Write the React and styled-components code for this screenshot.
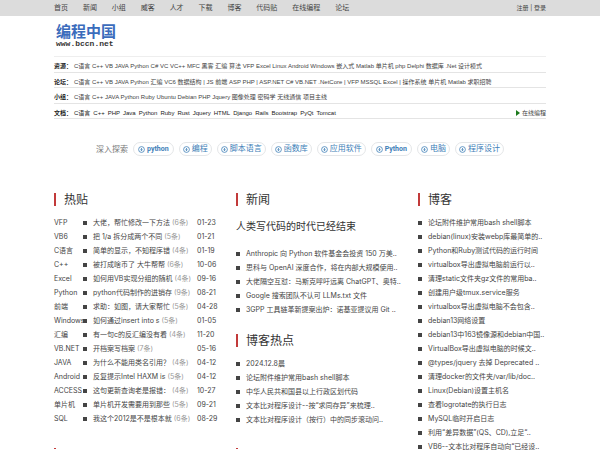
import React from "react";
import styled, { createGlobalStyle } from "styled-components";

const GlobalStyle = createGlobalStyle`
  * { box-sizing: border-box; }
  body {
    margin: 0;
    background: #fff;
    color: #444;
    font: 7px/14px Inter, "Noto Sans CJK SC", sans-serif;
  }
  a { color: inherit; text-decoration: none; }
  ul { list-style: none; margin: 0; padding: 0; }
`;

const TopBar = styled.header`
  display: flex;
  justify-content: space-between;
  align-items: center;
  height: 16px;
  padding: 0 9%;
  background: #dcdcdc;
  line-height: 16px;
`;
const Nav = styled.nav`
  display: flex;
  justify-content: space-between;
  width: 60%;
`;
const Account = styled.div`
  font-size: 6px;
  white-space: nowrap;
`;
const Page = styled.main`
  padding: 0 9%;
`;
const Logo = styled.a`
  display: block;
  width: max-content;
  margin: 7px 0 8px 2px;
`;
const LogoName = styled.strong`
  display: block;
  font: 700 15px/17px "Liberation Sans", "Noto Sans CJK SC", sans-serif;
  color: #3b6cbc;
`;
const LogoUrl = styled.span`
  display: block;
  font: 700 8px/8px "Liberation Mono", monospace;
  color: #333;
`;
const Directory = styled.section`
  display: flex;
  flex-direction: column;
  height: 63px;
  border-top: 1px solid #eee;
`;
const DirectoryRow = styled.div`
  display: flex;
  flex: 1;
  align-items: center;
  padding-top: 4px;
  border-bottom: 1px solid #e4e4e4;
  font-family: "Liberation Sans", "Noto Sans CJK SC", sans-serif;
  font-size: 6px;
  line-height: 10px;
  white-space: nowrap;
`;
const RowName = styled.strong`
  width: 20px;
  color: #222;
`;
const RowLinks = styled.div`
  display: ${(p) => (p.$wide ? "flex" : "block")};
  gap: 3px;
  color: ${(p) => (p.$wide ? "#222" : "#444")};
`;
const OnlineLink = styled.a`
  display: flex;
  align-items: center;
  gap: 2px;
  margin-left: auto;
`;
const Explore = styled.section`
  display: flex;
  justify-content: center;
  align-items: center;
  gap: 5px;
  margin: 23px 0 37px;
  white-space: nowrap;
`;
const ExploreTitle = styled.span`
  font-size: 8px;
  color: #777;
`;
const Pill = styled.a`
  display: flex;
  align-items: center;
  gap: 2px;
  height: 14px;
  padding: 0 ${(p) => (p.$latin ? 4 : 3)}px;
  border: 1px solid #e4e6e8;
  border-radius: 7px;
  color: #4080b8;
  font: ${(p) => (p.$latin ? "700 7px" : "400 8px")}/12px Roboto, "Noto Sans CJK SC", sans-serif;
`;
const Columns = styled.div`
  display: grid;
  grid-template-columns: 37% 37% 26%;
`;
const Heading = styled.h2`
  margin: 0 0 10px;
  padding-left: 8px;
  border-left: 2px solid #c23a3a;
  font-size: 12px;
  font-weight: 400;
  line-height: 13px;
  color: #333;
`;
const HotRow = styled.li`
  display: grid;
  grid-template-columns: 29px 10px 104px auto;
  align-items: center;
  height: 14px;
  white-space: nowrap;
`;
const Bullet = styled.i`
  width: 4px;
  height: 4px;
  background: #444;
`;
const Count = styled.span`
  color: #999;
`;
const Lead = styled.h3`
  margin: 13px 0 14px;
  font-size: 10px;
  font-weight: 400;
  line-height: 14px;
  color: #333;
`;
const PostRow = styled.li`
  display: flex;
  align-items: center;
  gap: 6px;
  height: 14px;
  white-space: nowrap;
`;
const Block = styled.section`
  margin-bottom: ${(p) => p.$gap || 0}px;
`;
const NextMark = styled.div`
  width: 2px;
  height: 1px;
  background: #c23a3a;
`;

const nav = ["首页", "新闻", "小组", "威客", "人才", "下载", "博客", "代码贴", "在线编程", "论坛"];
const directory = [
  ["资源：", "C语言 C++ VB JAVA Python C# VC VC++ MFC 黑客 汇编 算法 VFP Excel Linux Android Windows 嵌入式 Matlab 单片机 php Delphi 数据库 .Net 设计模式"],
  ["论坛：", "C语言 C++ VB JAVA Python 汇编 VC6 数据结构 | JS 前端 ASP PHP | ASP.NET C# VB.NET .NetCore | VFP MSSQL Excel | 操作系统 单片机 Matlab 求职招聘"],
  ["小组：", "C语言 C++ JAVA Python Ruby Ubuntu Debian PHP Jquery 图像处理 密码学 无线通信 项目主线"],
  ["文档：", "C语言 C++ PHP Java Python Ruby Rust Jquery HTML Django Rails Bootstrap PyQt Tomcat"],
];
const topics = ["python", "编程", "脚本语言", "函数库", "应用软件", "Python", "电脑", "程序设计"];
const hot = [
  ["VFP", "大佬，帮忙修改一下方法", 6, "01-23"],
  ["VB6", "把 1/a 拆分成两个不同", 5, "01-21"],
  ["C语言", "简单的显示，不知程序错", 4, "01-19"],
  ["C++", "被打成啥币了 大牛帮帮", 6, "10-06"],
  ["Excel", "如何用VB实现分组的随机", 4, "09-16"],
  ["Python", "python代码制作的进销存", 9, "08-21"],
  ["前端", "求助：如图，请大家帮忙", 5, "04-28"],
  ["Windows", "如何通过insert into s", 5, "01-05"],
  ["汇编", "有一句c的反汇编没有看", 4, "11-20"],
  ["VB.NET", "开档案写档案", 7, "05-16"],
  ["JAVA", "为什么不能用类名引用？", 4, "04-12"],
  ["Android", "反复提示Intel HAXM is", 5, "04-12"],
  ["ACCESS", "这句更新查询老是报错：", 4, "10-27"],
  ["单片机", "单片机开发需要用到那些", 5, "09-21"],
  ["SQL", "我这个2012是不是根本就", 6, "08-29"],
];
const news = [
  "Anthropic 向 Python 软件基金会投资 150 万美..",
  "思科与 OpenAI 深度合作，将在内部大规模使用..",
  "大佬隔空互怼：马斯克呼吁远离 ChatGPT、奥特..",
  "Google 搜索团队不认可 LLMs.txt 文件",
  "3GPP 工具链革新提案出炉：诺基亚提议用 Git ..",
];
const blogHot = [
  "2024.12.8晨",
  "论坛附件维护常用bash shell脚本",
  "中华人民共和国县以上行政区划代码",
  "文本比对程序设计--按“求同存异”来梳理..",
  "文本比对程序设计（按行）中的同步滚动问..",
];
const blogs = [
  "论坛附件维护常用bash shell脚本",
  "debian(linux)安装webp库最简单的..",
  "Python和Ruby测试代码的运行时间",
  "virtualbox导出虚拟电脑前运行以..",
  "清理static文件夹gz文件的常用ba..",
  "创建用户级tmux.service服务",
  "virtualbox导出虚拟电脑不会包含..",
  "debian13网络设置",
  "debian13中163镜像源和debian中国..",
  "VirtualBox导出虚拟电脑的时候文..",
  "@types/jquery 去掉 Deprecated ..",
  "清理docker的文件夹/var/lib/doc..",
  "Linux(Debian)设置主机名",
  "查看logrotate的执行日志",
  "MySQL临时开启日志",
  "利用“差异数据”(QS、CD),立足“..",
  "VB6--文本比对程序自动向“已经设..",
];

const TopicIcon = () => (
  <svg width="7" height="7" viewBox="0 0 14 14" fill="none" stroke="currentColor" strokeWidth="1.6" aria-hidden="true">
    <circle cx="7" cy="7" r="5.8" />
    <path d="M7 4v5M5 7l2 2.4L9 7" />
  </svg>
);

const Posts = ({ items }) => (
  <ul>
    {items.map((text) => (
      <PostRow key={text}>
        <Bullet />
        <a href="#post">{text}</a>
      </PostRow>
    ))}
  </ul>
);

export default function App() {
  return (
    <>
      <GlobalStyle />
      <TopBar>
        <Nav>
          {nav.map((n) => <a href="#nav" key={n}>{n}</a>)}
        </Nav>
        <Account><a href="#register">注册</a> | <a href="#login">登录</a></Account>
      </TopBar>
      <Page>
        <Logo href="#home">
          <LogoName>编程中国</LogoName>
          <LogoUrl>www.bccn.net</LogoUrl>
        </Logo>
        <Directory>
          {directory.map(([name, links], i) => (
            <DirectoryRow key={name}>
              <RowName>{name}</RowName>
              <RowLinks $wide={i === 3}>
                {links.split(" ").map((l, j) => (
                  <React.Fragment key={j}>
                    {l === "|" ? l : <a href="#topic">{l}</a>}{" "}
                  </React.Fragment>
                ))}
              </RowLinks>
              {i === 3 && (
                <OnlineLink href="#run">
                  <svg width="4" height="6" viewBox="0 0 4 6" aria-hidden="true"><path d="M0 0l4 3-4 3z" fill="#1c7a1c" /></svg>
                  在线编程
                </OnlineLink>
              )}
            </DirectoryRow>
          ))}
        </Directory>
        <Explore>
          <ExploreTitle>深入探索</ExploreTitle>
          {topics.map((t) => (
            <Pill href="#explore" key={t} $latin={/^[a-z]/i.test(t)}><TopicIcon />{t}</Pill>
          ))}
        </Explore>
        <Columns>
          <div>
            <Block $gap={22}>
              <Heading>热贴</Heading>
              <ul>
                {hot.map(([tag, title, n, date]) => (
                  <HotRow key={title}>
                    <a href="#tag">{tag}</a>
                    <Bullet />
                    <span><a href="#post">{title}</a> <Count>({n}条)</Count></span>
                    <time>{date}</time>
                  </HotRow>
                ))}
              </ul>
            </Block>
            <NextMark />
          </div>
          <div>
            <Block $gap={17}>
              <Heading>新闻</Heading>
              <Lead><a href="#lead">人类写代码的时代已经结束</a></Lead>
              <Posts items={news} />
            </Block>
            <Block $gap={21}>
              <Heading>博客热点</Heading>
              <Posts items={blogHot} />
            </Block>
            <NextMark />
          </div>
          <Block>
            <Heading>博客</Heading>
            <Posts items={blogs} />
          </Block>
        </Columns>
      </Page>
    </>
  );
}
